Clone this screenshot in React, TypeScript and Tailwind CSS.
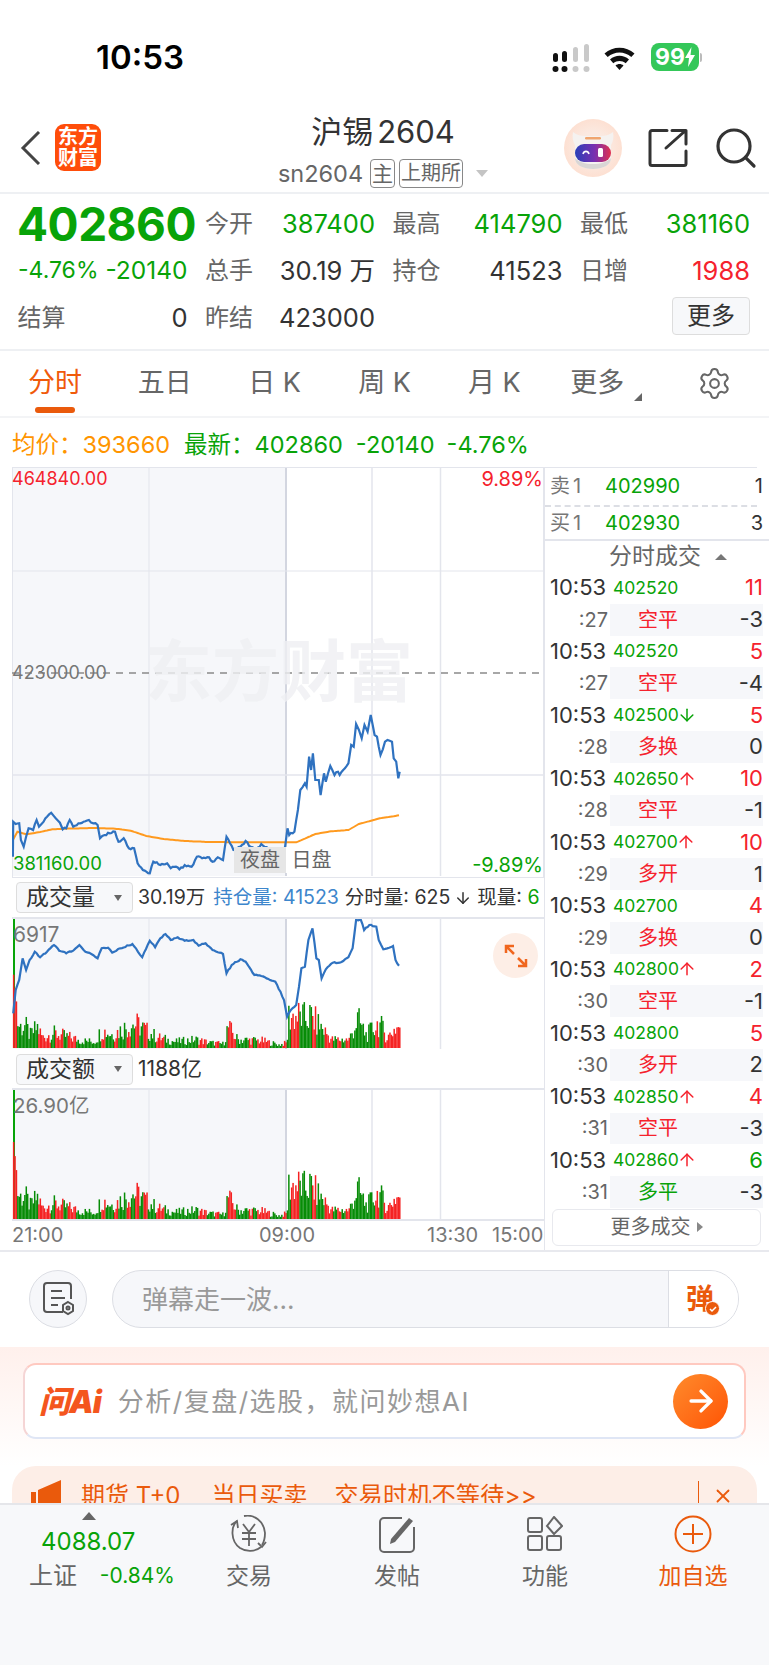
import { ArrowDown, ArrowRight, ArrowUp, Search, Settings, X } from 'lucide-react';

const GREEN = 'text-[#08a308]';
const RED = 'text-[#f5222d]';

type Pt = [number, number];

// points were read off the picture, sx/sy map them to page coordinates
const pricePts: Pt[] = [[37,650],[38,545],[45,552],[55,550],[60,600],[68,620],[75,590],[82,565],[95,570],[105,540],[112,560],[125,545],[135,530],[147,518],[160,535],[172,548],[180,568],[190,565],[200,540],[210,560],[225,550],[240,545],[255,540],[268,550],[280,555],[287,595],[300,585],[315,580],[330,575],[340,605],[355,595],[370,625],[385,625],[395,670],[410,690],[420,695],[430,700],[440,665],[460,675],[480,670],[490,685],[505,680],[515,688],[530,675],[550,680],[565,650],[580,655],[600,652],[610,665],[625,652],[640,660],[650,590],[660,610],[670,630],[690,620],[705,603],[720,620],[735,632],[750,612],[770,625],[785,632],[800,628],[818,622],[825,565],[830,585],[845,575],[855,510],[862,450],[875,430],[880,440],[887,350],[893,390],[898,340],[905,420],[915,420],[920,465],[930,400],[935,425],[948,378],[960,405],[970,395],[975,405],[990,385],[1000,370],[1008,315],[1015,320],[1022,252],[1030,270],[1038,295],[1046,255],[1055,275],[1064,225],[1075,285],[1082,290],[1092,345],[1105,305],[1112,300],[1125,305],[1130,355],[1137,365],[1143,415],[1147,395]];
const avgPts: Pt[] = [[37,600],[50,575],[75,583],[110,577],[150,568],[190,566],[270,564],[330,566],[375,572],[420,588],[470,597],[530,603],[600,606],[700,607],[850,607],[870,598],[905,582],[950,574],[1000,570],[1030,552],[1090,535],[1145,526]];
const oiPts: Pt[] = [[38,400],[45,330],[55,300],[65,235],[75,270],[85,240],[100,215],[115,232],[135,215],[155,195],[170,212],[190,220],[210,212],[228,195],[245,215],[262,222],[280,235],[292,205],[310,203],[322,218],[345,205],[380,192],[390,205],[408,232],[430,182],[445,202],[460,175],[475,162],[490,180],[510,172],[530,182],[555,180],[570,197],[590,190],[610,210],[640,222],[650,280],[665,255],[690,238],[705,245],[730,285],[750,288],[790,305],[805,335],[815,360],[824,410],[835,390],[850,375],[858,320],[865,265],[875,260],[885,180],[897,145],[908,235],[915,240],[923,295],[935,268],[955,248],[975,248],[1000,232],[1012,205],[1022,120],[1035,118],[1045,150],[1060,135],[1080,140],[1087,180],[1100,208],[1128,198],[1135,240],[1145,257]];
const volEnv: Pt[] = [[37,220],[45,140],[55,100],[70,105],[85,60],[105,100],[120,50],[150,70],[200,50],[230,35],[270,30],[290,85],[320,65],[380,115],[400,105],[420,80],[450,50],[500,30],[560,40],[600,25],[640,20],[652,100],[680,40],[750,35],[800,15],[822,25],[826,150],[860,150],[870,140],[888,150],[920,100],[950,40],[1000,40],[1025,135],[1050,60],[1085,120],[1110,50],[1130,90],[1150,110]];

const sx = (x: number) => x / 2.87;
const rnd = (i: number) => {
  const v = Math.sin(i * 12.9898) * 43758.5453;
  return v - Math.floor(v);
};

// subdivides long segments and adds a little noise so the line looks like ticks
const toLine = (pts: Pt[], top: number, amp: number) => {
  const out: string[] = [];
  pts.forEach(([x, y], i) => {
    const next = pts[i + 1];
    out.push(`${sx(x).toFixed(1)},${(top + y / 3).toFixed(1)}`);
    if (!next) return;
    const n = Math.floor((next[0] - x) / 5);
    for (let k = 1; k < n; k++) {
      const px = x + ((next[0] - x) * k) / n;
      const py = y + ((next[1] - y) * k) / n + (rnd(i * 7 + k) - 0.5) * amp;
      out.push(`${sx(px).toFixed(1)},${(top + py / 3).toFixed(1)}`);
    }
  });
  return out.join(' ');
};

const envAt = (x: number) => {
  for (let i = 1; i < volEnv.length; i++) {
    if (x <= volEnv[i][0]) {
      const [x0, y0] = volEnv[i - 1];
      const [x1, y1] = volEnv[i];
      return y0 + ((y1 - y0) * (x - x0)) / (x1 - x0);
    }
  }
  return 30;
};

const bars = Array.from({ length: 276 }, (_, i) => {
  const x = 37 + i * 4.03;
  const h = envAt(x) * (i < 3 ? 1 : 0.25 + 0.75 * rnd(i + 1));
  const red = i < 3 || rnd(Math.floor(i / 3) + 500) > (x > 820 ? 0.45 : 0.62);
  return { x: sx(x), h: h / 3, red };
});

const GridLines = ({ top, bottom }: { top: number; bottom: number }) => (
  <>
    <rect x="13" y={top} width="273" height={bottom - top} fill="#f6f7fa" />
    <line x1="149" y1={top} x2="149" y2={bottom} stroke="#e3e5ec" strokeWidth="1" />
    <line x1="286" y1={top} x2="286" y2={bottom} stroke="#d3d6e0" strokeWidth="2" />
    <line x1="372" y1={top} x2="372" y2={bottom} stroke="#e3e5ec" strokeWidth="1.5" />
    <line x1="440.5" y1={top} x2="440.5" y2={bottom} stroke="#e3e5ec" strokeWidth="1.5" />
  </>
);

const VolumeBars = ({ base, scale }: { base: number; scale: number }) => (
  <>
    {bars.map((b, i) => (
      <rect
        key={i}
        x={b.x}
        y={base - b.h * scale}
        width="1.5"
        height={b.h * scale}
        fill={b.red ? '#f52222' : '#078c07'}
      />
    ))}
  </>
);

const StatusBar = () => (
  <div className="flex h-[103px] shrink-0 items-start">
    <div className="ml-[96px] mt-[38px] text-[33px] font-semibold leading-[38px] text-black">10:53</div>
    <div className="ml-auto mr-[67px] mt-[43px] flex items-start">
      <svg width="38" height="29" viewBox="0 0 38 29" className="mt-[1px]">
        <rect x="1" y="9" width="5" height="9" rx="2.5" fill="#111" />
        <rect x="10" y="7" width="5" height="11" rx="2.5" fill="#111" />
        <rect x="21" y="3" width="5" height="15" rx="2.5" fill="#c9c9c9" />
        <rect x="32" y="0" width="5" height="18" rx="2.5" fill="#c9c9c9" />
        <circle cx="3.5" cy="25" r="3" fill="#111" />
        <circle cx="12.500" cy="25" r="3" fill="#111" />
        <circle cx="23.500" cy="25" r="3" fill="#c9c9c9" />
        <circle cx="34.500" cy="25" r="3" fill="#c9c9c9" />
      </svg>
      <svg width="33" height="25" viewBox="0 0 32 25" className="ml-[13px] mt-[2px]">
        <path d="M1 8.5C9.5 .8 22.500 .8 31 8.5l-3.200 3.600C21 6 11 6 4.200 12.100z" fill="#111" />
        <path d="M6.500 14.600c5.500-5 13.500-5 19 0l-3.300 3.600c-3.600-3.100-8.800-3.100-12.400 0z" fill="#111" />
        <path d="M12 20.600c2.400-2 5.600-2 8 0L16 25z" fill="#111" />
      </svg>
      <div className="ml-[15px] flex items-center">
        <div className="flex h-[28px] w-[48px] items-center justify-center rounded-[8px] bg-[#34c759] text-[23px] font-bold leading-none text-white">
          99
          <svg width="10" height="20" viewBox="0 0 10 20">
            <path d="M6.500 0 0 11h4l-1 9 7-12H5.500z" fill="#fff" />
          </svg>
        </div>
        <div className="ml-[1px] h-[9px] w-[2px] rounded-r bg-[#bbb]" />
      </div>
    </div>
  </div>
);

const RobotAvatar = () => (
  <svg width="58" height="58" viewBox="0 0 58 58">
    <defs>
      <radialGradient id="halo" cx="50%" cy="50%" r="50%">
        <stop offset="0.55" stopColor="#fbe9e0" />
        <stop offset="1" stopColor="#fde0d2" />
      </radialGradient>
      <linearGradient id="visor" x1="0" y1="0" x2="1" y2="0">
        <stop offset="0" stopColor="#2a3fb8" />
        <stop offset="0.55" stopColor="#7a2fb0" />
        <stop offset="1" stopColor="#e0324f" />
      </linearGradient>
    </defs>
    <circle cx="29" cy="29" r="29" fill="url(#halo)" />
    <path d="M9 13c4 3 8 4 12 4h16c4 0 8-1 12-4 1 5 0 10-2 13v13c0 7-8 11-18 11S11 46 11 39V26c-2-3-3-8-2-13z" fill="#f5f2f0" />
    <path d="M11 39c0 7 8 11 18 11s18-4 18-11c-4 4-10 6-18 6s-14-2-18-6z" fill="#d9d6d5" />
    <rect x="21" y="18" width="16" height="2.500" rx="1.200" fill="#f0a56f" />
    <rect x="11" y="25" width="36" height="18" rx="9" fill="url(#visor)" />
    <path d="M19 35c1-3.500 5-3.500 6 0" stroke="#fff" strokeWidth="1.600" fill="none" />
    <rect x="34" y="29" width="5" height="9" rx="1.500" fill="#fff" />
  </svg>
);

const ShareIcon = () => (
  <svg width="40" height="40" viewBox="0 0 40 40" fill="none" stroke="#333" strokeWidth="3" strokeLinecap="round" strokeLinejoin="round">
    <path d="M19 2.500H4a2 2 0 0 0-2 2v31a2 2 0 0 0 2 2h32a2 2 0 0 0 2-2V23" />
    <path d="M18 20 37 3M24 2.500h14V16" />
  </svg>
);

const Header = () => (
  <div className="flex h-[89px] shrink-0 items-start">
    <svg width="22" height="34" viewBox="0 0 22 34" fill="none" stroke="#444" strokeWidth="3" className="ml-[20px] mt-[28px]">
      <path d="M19 1 3 17l16 16" />
    </svg>
    <div className="ml-[13px] mt-[21px] flex h-[47px] w-[46px] flex-col items-center justify-center rounded-[9px] bg-[#ff4d0a] text-[20px] font-bold leading-[21px] text-white">
      <span>东方</span>
      <span>财富</span>
    </div>
    <div className="ml-[187px] flex w-[190px] flex-col items-center">
      <div className="mt-[10px] whitespace-nowrap text-[31px] leading-[38px] text-[#333]">
        沪锡<span className="ml-[4px]">2604</span>
      </div>
      <div className="mt-[8px] flex items-center whitespace-nowrap text-[23.5px] leading-[29px] text-[#666]">
        <span>sn2604</span>
        <span className="ml-[7px] rounded-[4px] border border-[#888] px-[1px] text-[21px] leading-[27px]">主</span>
        <span className="ml-[4px] rounded-[4px] border border-[#888] px-[1px] text-[20px] leading-[27px]">上期所</span>
        <span className="ml-[13px] h-0 w-0 border-x-[6px] border-t-[7px] border-x-transparent border-t-[#c4c4c4]" />
      </div>
    </div>
    <div className="ml-[86px] mt-[16px]">
      <RobotAvatar />
    </div>
    <div className="ml-[26px] mt-[25px]">
      <ShareIcon />
    </div>
    <Search size={48} strokeWidth={1.6} className="ml-[24px] mt-[21px] text-[#333]" />
  </div>
);

const Stat = ({ label, value, tone = 'text-[#333]' }: { label: string; value: string; tone?: string }) => (
  <div className="flex items-center justify-between whitespace-nowrap">
    <span className="-ml-[1.5px] text-[24px] text-[#666]">{label}</span>
    <span className={`text-[25.5px] ${tone}`}>{value}</span>
  </div>
);

const Quote = () => (
  <div className="h-[159px] shrink-0 border-y-2 border-[#eef0f3] pl-[19px] pt-[6px]">
    <div className="grid w-[731px] grid-cols-4 gap-x-[19px] [grid-auto-rows:47px] leading-[47px]">
      <div className={`-ml-[2px] mt-[1px] whitespace-nowrap text-[46px] font-bold leading-[47px] tracking-[-0.5px] ${GREEN}`}>402860</div>
      <Stat label="今开" value="387400" tone={GREEN} />
      <Stat label="最高" value="414790" tone={GREEN} />
      <Stat label="最低" value="381160" tone={GREEN} />
      <div className={`flex items-center justify-between whitespace-nowrap ${GREEN}`}>
        <span className="-ml-[1px] text-[23px]">-4.76%</span>
        <span className="text-[24.5px]">-20140</span>
      </div>
      <Stat label="总手" value="30.19 万" />
      <Stat label="持仓" value="41523" />
      <Stat label="日增" value="1988" tone={RED} />
      <Stat label="结算" value="0" />
      <Stat label="昨结" value="423000" />
      <div />
      <div className="flex items-center justify-end">
        <button
          type="button"
          className="-mt-[3px] h-[38px] w-[78px] rounded-[4px] border border-[#ddd] bg-[#f7f8fa] text-[24px] leading-[34px] text-[#333]"
        >
          更多
        </button>
      </div>
    </div>
  </div>
);

const Tabs = () => {
  const tabs = ['五日', '日 K', '周 K', '月 K'];
  return (
    <div className="grid h-[67px] shrink-0 grid-cols-7 border-b-2 border-[#f3f4f6]">
      <div className="relative flex items-center justify-center text-[27px] text-[#f05a0a]">
        分时
        <div className="absolute bottom-[3px] left-[35px] h-[6px] w-[40px] rounded-[3px] bg-[#ea5a0c]" />
      </div>
      {tabs.map((t) => (
        <div key={t} className="flex items-center justify-center text-[27px] text-[#666]">
          {t}
        </div>
      ))}
      <div className="relative flex items-center justify-start pl-[21px] text-[27px] text-[#666]">
        更多
        <span className="absolute bottom-[15px] left-[85px] h-0 w-0 border-b-[8px] border-l-[8px] border-b-[#666] border-l-transparent" />
      </div>
      <div className="flex items-center justify-center">
        <Settings size={35} strokeWidth={1.4} className="text-[#666]" />
      </div>
    </div>
  );
};

const InfoRow = () => (
  <div className="flex h-[49px] shrink-0 items-center whitespace-nowrap pl-[12px] pt-[4px] text-[23.5px]">
    <span className="text-[#ff9500]">均价：393660</span>
    <span className={`ml-[14px] ${GREEN}`}>最新：</span>
    <span className={GREEN}>402860</span>
    <span className={`ml-[13px] ${GREEN}`}>-20140</span>
    <span className={`ml-[12px] ${GREEN}`}>-4.76%</span>
  </div>
);

const PriceChart = () => (
  <div className="relative h-[411px] w-[532px] overflow-hidden">
    <svg width="532" height="411" viewBox="12 467 532 411" className="block">
      <GridLines top={468} bottom={876} />
      <rect x="12.500" y="467.500" width="531" height="410" fill="none" stroke="#e3e5ec" />
      <line x1="12" y1="571" x2="544" y2="571" stroke="#e3e5ec" />
      <line x1="12" y1="775" x2="544" y2="775" stroke="#e3e5ec" strokeWidth="1.500" />
      <line x1="12" y1="673" x2="544" y2="673" stroke="#8a8a8a" strokeWidth="1.500" strokeDasharray="7 6" />
      <polyline points={toLine(avgPts, 640, 0)} fill="none" stroke="#ff9a1f" strokeWidth="2" />
      <polyline points={toLine(pricePts, 640, 7)} fill="none" stroke="#2f72c0" strokeWidth="2.2" />
    </svg>
    <div className="absolute left-[133px] top-[165px] whitespace-nowrap text-[67px] font-bold leading-[80px] text-[#eff0f3] opacity-80">
      东方财富
    </div>
    <div className={`absolute left-0 top-[1px] text-[18px] leading-[22px] ${RED}`}>464840.00</div>
    <div className={`absolute right-[1px] top-[1px] text-[20px] leading-[22px] ${RED}`}>9.89%</div>
    <div className="absolute left-0 top-[195px] text-[18px] leading-[22px] text-[#777]">423000.00</div>
    <div className={`absolute bottom-[4px] left-[1px] text-[18.5px] leading-[22px] ${GREEN}`}>381160.00</div>
    <div className={`absolute bottom-[2px] right-[1px] text-[20px] leading-[22px] ${GREEN}`}>-9.89%</div>
    <div className="absolute bottom-[5px] left-[222px] flex h-[26px] text-[20px] leading-[26px] text-[#666]">
      <span className="w-[52px] bg-[#e6e6e6] text-center">夜盘</span>
      <span className="w-[51px] bg-white text-center">日盘</span>
    </div>
  </div>
);

const ChartSelect = ({ label }: { label: string }) => (
  <div className="flex h-[31px] w-[117px] items-center justify-between rounded-[4px] border border-[#ddd] bg-[#f7f8fa] pl-[9px] pr-[10px] text-[23px] text-[#333]">
    {label}
    <span className="h-0 w-0 border-x-[4px] border-t-[6px] border-x-transparent border-t-[#666]" />
  </div>
);

const VolumeChart = () => (
  <div className="relative h-[133px] w-[532px] border-t-2 border-[#e3e5ec]">
    <svg width="532" height="131" viewBox="12 919 532 131" className="block">
      <GridLines top={919} bottom={1049} />
      <rect x="13" y="919" width="2" height="129" fill="#08a308" />
      <VolumeBars base={1048} scale={1} />
      <polyline points={toLine(oiPts, 880, 4)} fill="none" stroke="#2f72c0" strokeWidth="2.2" />
    </svg>
    <div className="absolute left-[1px] top-[4px] text-[21px] leading-[24px] text-[#777]">6917</div>
    <div className="absolute left-[481px] top-[14px] flex h-[45px] w-[45px] items-center justify-center rounded-full bg-[#fdeee6]">
      <svg width="24" height="24" viewBox="0 0 24 24" fill="none" stroke="#f0661e" strokeWidth="2.500">
        <path d="M2 9V2h8M2 2l8 8M22 15v7h-8M22 22l-8-8" />
      </svg>
    </div>
  </div>
);

const AmountChart = () => (
  <div className="relative h-[133px] w-[532px] border-y-2 border-[#e3e5ec]">
    <svg width="532" height="129" viewBox="12 1090 532 129" className="block">
      <GridLines top={1090} bottom={1219} />
      <rect x="13" y="1090" width="2" height="129" fill="#08a308" />
      <VolumeBars base={1219} scale={1.05} />
    </svg>
    <div className="absolute left-[1px] top-[4px] text-[20.5px] leading-[24px] text-[#777]">26.90亿</div>
  </div>
);

const LeftPanel = () => (
  <div className="w-[544px] shrink-0 pl-[12px]">
    <PriceChart />
    <div className="flex h-[39px] items-center whitespace-nowrap pl-[4px] text-[19.5px] text-[#333]">
      <ChartSelect label="成交量" />
      <span className="ml-[5px]">30.19万</span>
      <span className="ml-[8px] text-[#3d86cc]">持仓量: 41523</span>
      <span className="ml-[6px]">分时量: 625</span>
      <ArrowDown size={18} className="ml-[4px]" />
      <span className="ml-[5px]">
        现量: <span className={GREEN}>6</span>
      </span>
    </div>
    <VolumeChart />
    <div className="flex h-[38px] items-center gap-[5px] pl-[4px] text-[21px] text-[#333]">
      <ChartSelect label="成交额" />
      <span>1188亿</span>
    </div>
    <AmountChart />
    <div className="flex h-[29px] items-center whitespace-nowrap pb-[1px] text-[20px] leading-none text-[#777]">
      <span className="w-[247px]">21:00</span>
      <span className="w-[168px]">09:00</span>
      <span className="w-[65px]">13:30</span>
      <span>15:00</span>
    </div>
  </div>
);

type Trade = {
  sec: string;
  price: string;
  arrow?: 'up' | 'down';
  qty: string;
  qtyGreen?: boolean;
  kind: string;
  kindGreen?: boolean;
  oi: string;
};

const trades: Trade[] = [
  { sec: ':27', price: '402520', qty: '11', kind: '空平', oi: '-3' },
  { sec: ':27', price: '402520', qty: '5', kind: '空平', oi: '-4' },
  { sec: ':28', price: '402500', arrow: 'down', qty: '5', kind: '多换', oi: '0' },
  { sec: ':28', price: '402650', arrow: 'up', qty: '10', kind: '空平', oi: '-1' },
  { sec: ':29', price: '402700', arrow: 'up', qty: '10', kind: '多开', oi: '1' },
  { sec: ':29', price: '402700', qty: '4', kind: '多换', oi: '0' },
  { sec: ':30', price: '402800', arrow: 'up', qty: '2', kind: '空平', oi: '-1' },
  { sec: ':30', price: '402800', qty: '5', kind: '多开', oi: '2' },
  { sec: ':31', price: '402850', arrow: 'up', qty: '4', kind: '空平', oi: '-3' },
  { sec: ':31', price: '402860', arrow: 'up', qty: '6', qtyGreen: true, kind: '多平', kindGreen: true, oi: '-3' },
];

const TradeRows = ({ t }: { t: Trade }) => (
  <>
    <div className="flex h-[31.8px] items-center pl-[5px] pr-[6px]">
      <span className="w-[63px] text-[22px] text-[#333]">10:53</span>
      <span className={`text-[17.5px] ${GREEN}`}>{t.price}</span>
      {t.arrow === 'up' && <ArrowUp size={20} strokeWidth={1.8} className={`-ml-[2px] ${RED}`} />}
      {t.arrow === 'down' && <ArrowDown size={20} strokeWidth={1.8} className={`-ml-[2px] ${GREEN}`} />}
      <span className={`ml-auto text-[22px] ${t.qtyGreen ? GREEN : RED}`}>{t.qty}</span>
    </div>
    <div className="flex h-[31.8px] items-center pr-[6px]">
      <span className="w-[63px] text-right text-[20px] text-[#666]">{t.sec}</span>
      <div className="ml-[2px] flex h-full flex-1 items-center justify-between bg-[#f6f7fa]">
        <span className={`ml-[28px] text-[20px] ${t.kindGreen ? GREEN : RED}`}>{t.kind}</span>
        <span className="text-[22px] text-[#333]">{t.oi}</span>
      </div>
    </div>
  </>
);

const RightPanel = () => (
  <div className="flex-1 border-l border-[#e3e5ec]">
    <div className="mr-[12px] flex h-[38px] items-center border-y border-t-[#e3e5ec] border-b-transparent pl-[5px] text-[20px]">
      <span className="w-[55px] tracking-[3px] text-[#777]">卖1</span>
      <span className={GREEN}>402990</span>
      <span className="-mr-[6px] ml-auto text-[#333]">1</span>
    </div>
    <div className="mr-[12px] border-t-2 border-dashed border-[#dcdee4]" />
    <div className="flex h-[32px] items-center pl-[5px] pr-[6px] text-[20px]">
      <span className="w-[55px] tracking-[3px] text-[#777]">买1</span>
      <span className={GREEN}>402930</span>
      <span className="ml-auto text-[#333]">3</span>
    </div>
    <div className="flex h-[33px] items-center justify-center gap-[14px] border-t-2 border-[#e3e5ec] pl-[22px] text-[23px] leading-none text-[#666]">
      分时成交
      <span className="h-0 w-0 border-x-[6px] border-b-[6px] border-x-transparent border-b-[#777]" />
    </div>
    {trades.map((t, i) => (
      <TradeRows key={i} t={t} />
    ))}
    <button
      type="button"
      className="ml-[7px] mt-[1px] flex h-[37px] w-[209px] items-center justify-center gap-[6px] rounded-[6px] border border-[#e8e9ee] text-[20px] text-[#666]"
    >
      更多成交
      <span className="h-0 w-0 border-y-[5px] border-l-[6px] border-y-transparent border-l-[#888]" />
    </button>
  </div>
);

const CommentBar = () => (
  <div className="flex h-[97px] shrink-0 items-start border-t-2 border-[#e8e9ee] pl-[29px] pt-[18px]">
    <div className="flex h-[58px] w-[58px] items-center justify-center rounded-full border border-[#dcdee4] bg-[#f6f7fa]">
      <svg width="36" height="36" viewBox="0 0 36 36" fill="none" stroke="#555" strokeWidth="2">
        <path d="M23 31H7a3 3 0 0 1-3-3V5a3 3 0 0 1 3-3h21a3 3 0 0 1 3 3v13" />
        <path d="M11 10h11M11 17h14M11 24h7" />
        <path d="m28 21 5 3v6l-5 3-5-3v-6z" />
        <circle cx="28" cy="27" r="1.500" />
      </svg>
    </div>
    <div className="ml-[25px] flex h-[58px] w-[627px] items-center overflow-hidden rounded-full border border-[#dcdee4] bg-[#f6f7fa]">
      <span className="ml-[29px] flex-1 text-[26px] text-[#999]">弹幕走一波...</span>
      <div className="relative flex h-full w-[70px] items-center border-l border-[#dcdee4] bg-white pl-[17px] text-[28px] font-bold text-[#ea5a0c]">
        弹
        <span className="absolute bottom-[11px] left-[36px] flex h-[15px] w-[15px] items-center justify-center rounded-full border border-white bg-[#ea5a0c]">
          <svg width="10" height="10" viewBox="0 0 10 10" fill="none" stroke="#fff" strokeWidth="1.500">
            <path d="m2 5 2 2 4-4" />
          </svg>
        </span>
      </div>
    </div>
  </div>
);

const AskAi = () => (
  <div className="h-[119px] shrink-0 bg-gradient-to-b from-[#fff0ec] to-white px-[23px] pt-[16px]">
    <div className="flex h-[76px] items-center rounded-[13px] border-2 border-t-[#ffc9c0] border-r-[#ffc9c0] border-b-[#dfe6f5] border-l-[#f5d5d5] bg-white pl-[14px] pr-[16px]">
      <span className="text-[31px] font-black italic leading-none tracking-[-1px] text-[#f4561e]">问Ai</span>
      <span className="ml-[17px] flex-1 whitespace-nowrap text-[26px] tracking-[1.5px] text-[#999]">分析/复盘/选股，就问妙想AI</span>
      <div className="flex h-[55px] w-[55px] items-center justify-center rounded-full bg-gradient-to-br from-[#ff8a2a] to-[#ff5200]">
        <ArrowRight size={34} strokeWidth={2.4} className="text-white" />
      </div>
    </div>
  </div>
);

const Banner = () => (
  <div className="mx-[12px] h-[37px] shrink-0 overflow-hidden rounded-t-[24px] bg-[#fdeee7]">
    <div className="flex h-[60px] items-center whitespace-nowrap pl-[19px] text-[24px] text-[#ea5a0c]">
      <svg width="31" height="32" viewBox="0 0 31 32">
        <path d="M0 12h5v20H0zM7 10 30 0v32H7z" fill="#ea5a0c" />
      </svg>
      <span className="ml-[19px]">期货 T+0</span>
      <span className="ml-[31px]">当日买卖</span>
      <span className="ml-[27px] tracking-[0.3px]">交易时机不等待&gt;&gt;</span>
      <span className="ml-[161px] h-[30px] w-[1px] bg-[#ea5a0c]" />
      <X size={22} className="ml-[13px]" />
    </div>
  </div>
);

const TradeIcon = () => (
  <svg width="44" height="38" viewBox="0 0 44 38" fill="none" stroke="#666" strokeWidth="1.800">
    <path d="M10 6C4 11 3 26 13 33c6 4 15 4 21-1" />
    <path d="M17 1c10-2 20 5 21 17 0 5-1 9-3 12" />
    <path d="m4 10 6-4 1 7M31 28l4 4 4-5" />
    <path d="m16 9 6 8 6-8M22 17v14M15 18h14M15 24h14" />
  </svg>
);

const PostIcon = () => (
  <svg width="38" height="38" viewBox="0 0 38 38" fill="none" stroke="#666" strokeWidth="2">
    <path d="M24 3H6a4 4 0 0 0-4 4v26a4 4 0 0 0 4 4h26a4 4 0 0 0 4-4V12" />
    <path d="m13 24 18-21 4 3-18 21-5 2z" fill="#666" stroke="none" />
  </svg>
);

const FuncIcon = () => (
  <svg width="36" height="36" viewBox="0 0 36 36" fill="none" stroke="#666" strokeWidth="2">
    <rect x="1" y="2" width="14" height="14" rx="2" />
    <rect x="1" y="20" width="14" height="14" rx="2" />
    <rect x="20" y="20" width="14" height="14" rx="2" />
    <path d="m27 1 8 9-8 8-7-8z" />
  </svg>
);

const BottomItem = ({ icon, label, orange }: { icon: React.ReactNode; label: string; orange?: boolean }) => (
  <div className="flex flex-col items-center">
    <div className="flex h-[44px] items-center justify-center">{icon}</div>
    <span className={`mt-[5px] text-[23px] leading-[30px] ${orange ? 'text-[#ea5a0c]' : 'text-[#666]'}`}>{label}</span>
  </div>
);

const BottomBar = () => (
  <div className="flex h-[162px] shrink-0 items-start border-t-2 border-[#e5e6ea] bg-[#f7f8fa] pt-[7px]">
    <div className="ml-[29px] flex w-[146px] flex-col">
      <span className="ml-[53px] h-0 w-0 border-x-[7px] border-b-[8px] border-x-transparent border-b-[#666]" />
      <span className={`ml-[12px] mt-[7px] text-[24px] leading-[30px] ${GREEN}`}>4088.07</span>
      <div className="mt-[4px] flex items-center justify-between whitespace-nowrap leading-[30px]">
        <span className="text-[24px] text-[#666]">上证</span>
        <span className={`text-[21px] ${GREEN}`}>-0.84%</span>
      </div>
    </div>
    <div className="grid w-[592px] grid-cols-4">
      <BottomItem icon={<TradeIcon />} label="交易" />
      <BottomItem icon={<PostIcon />} label="发帖" />
      <BottomItem icon={<FuncIcon />} label="功能" />
      <BottomItem
        orange
        label="加自选"
        icon={
          <svg width="38" height="38" viewBox="0 0 38 38" fill="none" stroke="#ea5a0c" strokeWidth="2">
            <circle cx="19" cy="19" r="17.500" />
            <path d="M19 9v20M9 19h20" />
          </svg>
        }
      />
    </div>
  </div>
);

export default function App() {
  return (
    <div className="flex h-[1665px] w-[769px] flex-col overflow-hidden bg-white font-[family-name:Inter,'Noto_Sans_CJK_SC',sans-serif]">
      <StatusBar />
      <Header />
      <Quote />
      <Tabs />
      <InfoRow />
      <div className="flex h-[783px] shrink-0">
        <LeftPanel />
        <RightPanel />
      </div>
      <CommentBar />
      <AskAi />
      <Banner />
      <BottomBar />
    </div>
  );
}
